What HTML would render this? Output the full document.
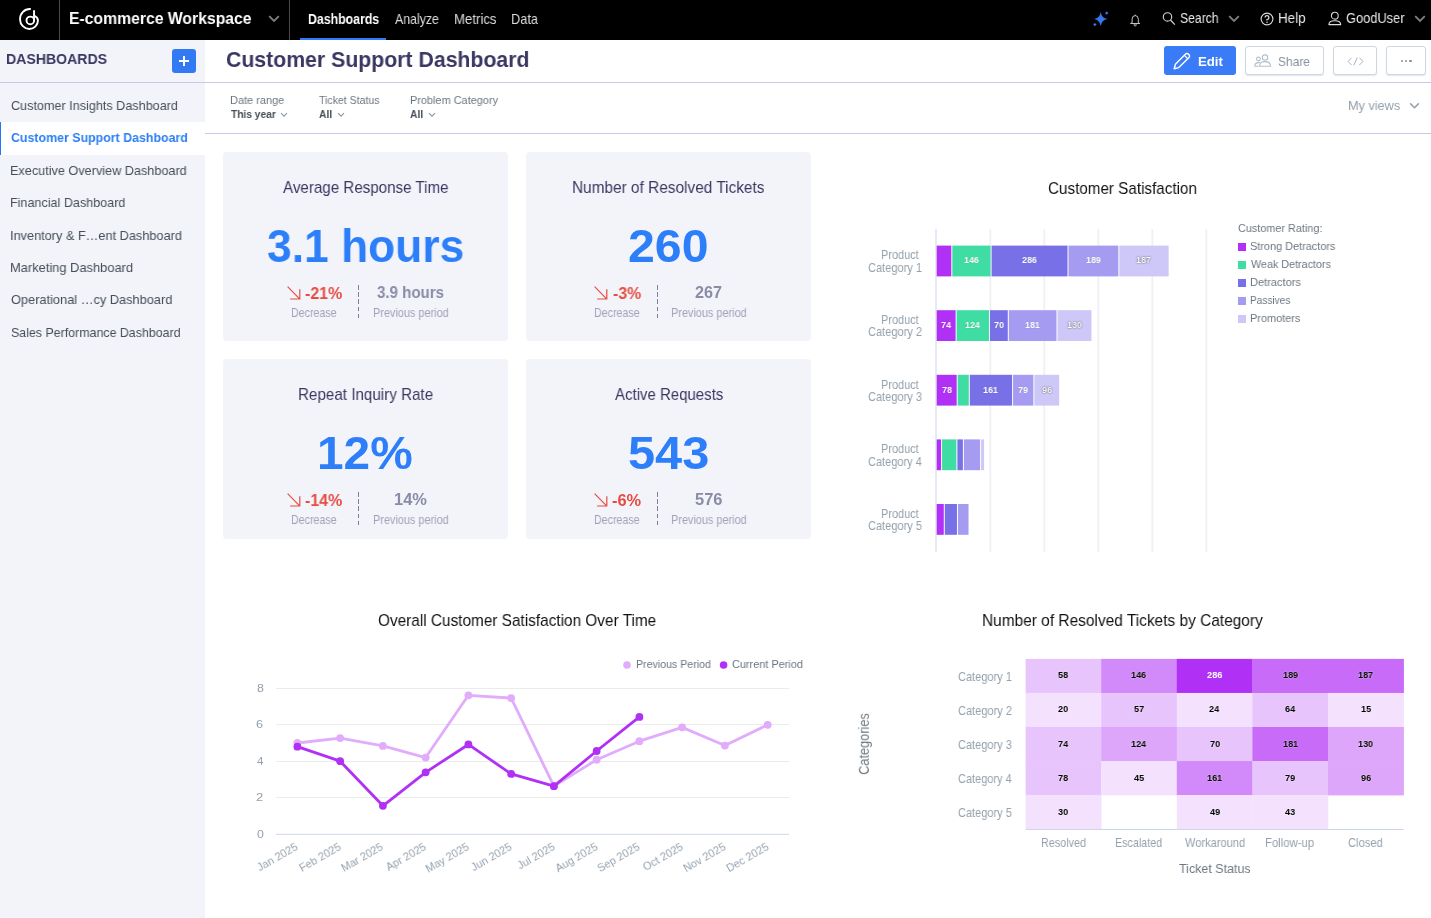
<!DOCTYPE html>
<html lang="en">
<head>
<meta charset="utf-8">
<title>Customer Support Dashboard</title>
<style>
*{box-sizing:border-box;margin:0;padding:0}
html,body{width:1431px;height:918px;overflow:hidden;background:#fff}
body{font-family:"Liberation Sans",sans-serif;position:relative;color:#464e56}
.abs{position:absolute}
.t{position:absolute;white-space:nowrap;line-height:1;transform-origin:0 0;will-change:transform}
#topbar{position:absolute;left:0;top:0;width:1431px;height:40px;background:#000}
.tsep{position:absolute;top:0;width:1px;height:40px;background:#4a4a4a}
#side{position:absolute;left:0;top:40px;width:205px;height:878px;background:#f3f4fa}
#sel{position:absolute;left:0;top:122px;width:205px;height:33px;background:#fff;border-left:1px solid #2276fc}
#hline{position:absolute;left:0;top:82px;width:1431px;height:1px;background:#c4c8ea}
#fline{position:absolute;left:205px;top:133px;width:1226px;height:1px;background:#c4c8ea}
.btn{position:absolute;top:46px;height:29px;border:1px solid #cfd8e2;border-radius:3px;background:#fff;box-shadow:0 1px 1px rgba(20,56,93,.12)}
.card{position:absolute;background:#f3f4fa;border-radius:4px}
.kdiv{position:absolute;width:1px;height:36px;background:repeating-linear-gradient(to bottom,#7f8199 0,#7f8199 4.7px,transparent 4.7px,transparent 7.2px)}
svg{position:absolute;overflow:visible}
</style>
</head>
<body>
<div id="topbar">
<svg style="left:16px;top:6px" width="26" height="28" viewBox="16 6 26 28">
<path d="M30.1 8.95 A9.7 10.2 0 0 0 20.05 19.4 A9.5 9.7 0 0 0 29.5 29 A8.6 8.6 0 0 0 37.95 20.4 Q37.9 17.4 34.4 15.9" fill="none" stroke="#fff" stroke-width="1.9" stroke-linecap="round"/>
<circle cx="30.3" cy="20.4" r="3.8" fill="none" stroke="#fff" stroke-width="1.9"/>
<path d="M34.05 20.4 V11" fill="none" stroke="#fff" stroke-width="1.95" stroke-linecap="round"/>
</svg>
<div class="tsep" style="left:59px"></div>
<div class="t" id="ws" style="left:68.58px;top:11px;font-size:16.6px;color:#fff;font-weight:bold;transform:scaleX(0.9481);">E-commerce Workspace</div>
<svg style="left:268px;top:15.4px" width="12" height="8" viewBox="0 0 12 8"><path d="M1.2 1.2 L6 6 L10.8 1.2" fill="none" stroke="#808080" stroke-width="1.8"/></svg>
<div class="tsep" style="left:289px"></div>
<div class="t" id="n1" style="left:307.8px;top:12px;font-size:14.2px;color:#fff;font-weight:bold;transform:scaleX(0.8686);">Dashboards</div>
<div class="t" id="n2" style="left:394.6px;top:12px;font-size:14.2px;color:#dcdcdc;transform:scaleX(0.8695);">Analyze</div>
<div class="t" id="n3" style="left:453.54px;top:12px;font-size:14.2px;color:#dcdcdc;transform:scaleX(0.9299);">Metrics</div>
<div class="t" id="n4" style="left:510.58px;top:12px;font-size:14.2px;color:#dcdcdc;transform:scaleX(0.9020);">Data</div>
<div class="abs" style="left:300px;top:38px;width:86px;height:2px;background:#2f7df6"></div>
<svg id="spark" style="left:1093px;top:10px" width="17" height="17" viewBox="0 0 17 17">
<path d="M7.7 1.9 Q8.6 8.1 14.6 9 Q8.6 9.9 7.7 16.1 Q6.8 9.9 0.9 9 Q6.8 8.1 7.7 1.9Z" fill="#3577ee"/>
<path d="M13.7 1.4 L15.4 3.1 L13.7 4.8 L12 3.1Z" fill="#3577ee"/>
<path d="M1.9 12.9 L3.6 14.6 L1.9 16.3 L0.2 14.6Z" fill="#3577ee"/>
</svg>
<svg id="bell" style="left:1129px;top:14px" width="13" height="13" viewBox="0 0 13 13">
<path d="M3.1 8.9 V5.2 A3.1 3.6 0 0 1 9.3 5.2 V8.9 L10.9 9.5 H1.5 Z" fill="none" stroke="#c4c4c4" stroke-width="1" stroke-linejoin="round"/>
<circle cx="6.2" cy="10.9" r="1.1" fill="none" stroke="#c4c4c4" stroke-width="0.9"/>
<path d="M6.2 0.6 V1.7" stroke="#c4c4c4" stroke-width="1"/>
</svg>
<svg id="mag" style="left:1162px;top:12px" width="14" height="14" viewBox="0 0 14 14"><circle cx="5.5" cy="4.9" r="4.2" fill="none" stroke="#d0d0d0" stroke-width="1.15"/><path d="M8.5 8 L12.8 12.6" stroke="#d0d0d0" stroke-width="1.3"/></svg>
<div class="t" id="r1" style="left:1180.15px;top:11px;font-size:14px;color:#e6e6e6;transform:scaleX(0.8707);">Search</div>
<svg style="left:1227.7px;top:14.6px" width="12" height="8" viewBox="0 0 12 8"><path d="M1.2 1.2 L6 6 L10.8 1.2" fill="none" stroke="#808080" stroke-width="1.8"/></svg>
<svg id="helpi" style="left:1260px;top:12px" width="14" height="14" viewBox="0 0 14 14"><circle cx="7" cy="7" r="5.9" fill="none" stroke="#ddd" stroke-width="1.1"/><path d="M5.1 5.6 A1.9 1.9 0 1 1 7 7.5 V8.6" fill="none" stroke="#ddd" stroke-width="1.2"/><circle cx="7" cy="10.3" r="0.75" fill="#ddd"/></svg>
<div class="t" id="r2" style="left:1277.93px;top:11px;font-size:14px;color:#e6e6e6;transform:scaleX(0.9598);">Help</div>
<svg id="useri" style="left:1328px;top:12px" width="14" height="14" viewBox="0 0 14 14"><circle cx="6.8" cy="3.7" r="3.4" fill="none" stroke="#d4d4d4" stroke-width="1.1"/><path d="M0.9 12.6 C0.9 9.6 3.4 8.7 6.8 8.7 C10.2 8.7 12.7 9.6 12.7 12.6 Z" fill="none" stroke="#ddd" stroke-width="1.1" stroke-linejoin="round"/></svg>
<div class="t" id="r3" style="left:1346.46px;top:11px;font-size:14px;color:#e6e6e6;transform:scaleX(0.9169);">GoodUser</div>
<svg style="left:1413.9px;top:14.6px" width="12" height="8" viewBox="0 0 12 8"><path d="M1.2 1.2 L6 6 L10.8 1.2" fill="none" stroke="#808080" stroke-width="1.8"/></svg>
</div>
<div id="side"></div><div id="sel"></div>
<div class="t" id="dbh" style="left:6.48px;top:51px;font-size:15px;color:#3a3761;font-weight:bold;transform:scaleX(0.9398);">DASHBOARDS</div>
<div class="abs" style="left:172px;top:49px;width:24px;height:24px;background:#3279f4;border-radius:3px"><div class="abs" style="left:6.6px;top:11.3px;width:10.8px;height:1.5px;background:#fff"></div><div class="abs" style="left:11.25px;top:6.6px;width:1.5px;height:10.8px;background:#fff"></div></div>
<div class="t" id="s0" style="left:10.77px;top:99px;font-size:13.3px;color:#464e56;transform:scaleX(0.9490);">Customer Insights Dashboard</div>
<div class="t" id="s1" style="left:10.9px;top:131px;font-size:13.3px;color:#2b7ff6;font-weight:bold;transform:scaleX(0.9314);">Customer Support Dashboard</div>
<div class="t" id="s2" style="left:10.39px;top:164px;font-size:13.3px;color:#464e56;transform:scaleX(0.9528);">Executive Overview Dashboard</div>
<div class="t" id="s3" style="left:10.39px;top:196px;font-size:13.3px;color:#464e56;transform:scaleX(0.9459);">Financial Dashboard</div>
<div class="t" id="s4" style="left:10.25px;top:229px;font-size:13.3px;color:#464e56;transform:scaleX(0.9571);">Inventory &amp; F…ent Dashboard</div>
<div class="t" id="s5" style="left:10.37px;top:261px;font-size:13.3px;color:#464e56;transform:scaleX(0.9682);">Marketing Dashboard</div>
<div class="t" id="s6" style="left:10.82px;top:293px;font-size:13.3px;color:#464e56;transform:scaleX(0.9616);">Operational …cy Dashboard</div>
<div class="t" id="s7" style="left:10.84px;top:326px;font-size:13.3px;color:#464e56;transform:scaleX(0.9325);">Sales Performance Dashboard</div>
<div id="hline"></div>
<div class="t" id="title" style="left:225.75px;top:49px;font-size:22.4px;color:#3a3761;font-weight:bold;transform:scaleX(0.9492);">Customer Support Dashboard</div>
<div class="abs" style="left:1164px;top:46px;width:72px;height:29px;background:#3a7cf7;border-radius:3px"></div>
<svg style="left:1172px;top:51px" width="20" height="20" viewBox="0 0 20 20">
<path d="M2.2 17.8 L3.4 13.2 L13.6 3 A1.9 1.9 0 0 1 16.3 3 L17 3.7 A1.9 1.9 0 0 1 17 6.4 L6.8 16.6 Z" fill="none" stroke="#fff" stroke-width="1.4" stroke-linejoin="round"/>
<path d="M12.4 4.4 L15.6 7.6" stroke="#fff" stroke-width="1.3"/>
</svg>
<div class="t" id="bedit" style="left:1197.56px;top:55px;font-size:13.2px;color:#fff;font-weight:bold;transform:scaleX(0.9836);">Edit</div>
<div class="btn" style="left:1245px;width:79px"></div>
<svg style="left:1254px;top:54px" width="18" height="13" viewBox="0 0 18 13">
<circle cx="11" cy="3.6" r="2.7" fill="none" stroke="#b3c0cc" stroke-width="1.1"/>
<path d="M5.6 12.2 C5.6 8.8 7.6 7.6 11 7.6 C14.4 7.6 16.6 8.8 16.6 12.2 Z" fill="none" stroke="#b3c0cc" stroke-width="1.1" stroke-linejoin="round"/>
<circle cx="4.4" cy="5" r="1.9" fill="none" stroke="#b3c0cc" stroke-width="1.1"/>
<path d="M4.6 12.2 H0.8 C0.8 9.6 2 8.6 4.6 8.6 C5.2 8.6 5.6 8.7 6 8.8" fill="none" stroke="#b3c0cc" stroke-width="1.1" stroke-linejoin="round"/>
</svg>
<div class="t" id="bshare" style="left:1278.46px;top:55px;font-size:13.2px;color:#8492a0;transform:scaleX(0.9073);">Share</div>
<div class="btn" style="left:1333px;width:44px"></div>
<svg style="left:1347px;top:57px" width="17" height="9" viewBox="0 0 17 9"><path d="M4.6 0.8 L1 4.4 L4.6 8 M12.4 0.8 L16 4.4 L12.4 8 M10.2 0.6 L6.8 8.2" fill="none" stroke="#a8b4c0" stroke-width="1"/></svg>
<div class="btn" style="left:1386px;width:40px"></div>
<div class="abs" style="left:1401.2px;top:60.2px;width:2.2px;height:2.2px;border-radius:50%;background:#8492a0"></div>
<div class="abs" style="left:1405.3px;top:60.2px;width:2.2px;height:2.2px;border-radius:50%;background:#8492a0"></div>
<div class="abs" style="left:1409.4px;top:60.2px;width:2.2px;height:2.2px;border-radius:50%;background:#8492a0"></div>
<div class="t" id="f1" style="left:229.82px;top:95px;font-size:11.3px;color:#6d7680;transform:scaleX(0.9721);">Date range</div>
<div class="t" id="f1v" style="left:230.6px;top:109px;font-size:11.3px;color:#464e56;font-weight:bold;transform:scaleX(0.9022);">This year</div>
<div class="t" id="f2" style="left:318.59px;top:95px;font-size:11.3px;color:#6d7680;transform:scaleX(0.9332);">Ticket Status</div>
<div class="t" id="f2v" style="left:318.54px;top:109px;font-size:11.3px;color:#464e56;font-weight:bold;transform:scaleX(0.9111);">All</div>
<div class="t" id="f3" style="left:409.53px;top:95px;font-size:11.3px;color:#6d7680;transform:scaleX(0.9670);">Problem Category</div>
<div class="t" id="f3v" style="left:410.14px;top:109px;font-size:11.3px;color:#464e56;font-weight:bold;transform:scaleX(0.9111);">All</div>
<svg style="left:280.2px;top:111.8px" width="8" height="6" viewBox="0 0 8 6"><path d="M1 1.2 L4 4.2 L7 1.2" fill="none" stroke="#8a96a2" stroke-width="1.1"/></svg>
<svg style="left:336.5px;top:111.8px" width="8" height="6" viewBox="0 0 8 6"><path d="M1 1.2 L4 4.2 L7 1.2" fill="none" stroke="#8a96a2" stroke-width="1.1"/></svg>
<svg style="left:428.2px;top:111.8px" width="8" height="6" viewBox="0 0 8 6"><path d="M1 1.2 L4 4.2 L7 1.2" fill="none" stroke="#8a96a2" stroke-width="1.1"/></svg>
<div class="t" id="mv" style="left:1347.78px;top:99px;font-size:13px;color:#94a1ad;transform:scaleX(0.9762);">My views</div>
<svg style="left:1408.8px;top:102.2px" width="11" height="8" viewBox="0 0 11 8"><path d="M1.2 1.4 L5.5 5.7 L9.8 1.4" fill="none" stroke="#94a1ad" stroke-width="1.5"/></svg>
<div id="fline"></div>
<div class="card" style="left:223px;top:152px;width:285px;height:189px"></div>
<div class="t" style="left:283px;top:179px;font-size:16.4px;color:#3a3761;transform:scaleX(0.9239);">Average Response Time</div>
<div class="t" style="left:267.31px;top:222px;font-size:47px;color:#2d7ff9;font-weight:bold;transform:scaleX(0.9442);">3.1 hours</div>
<svg style="left:286.5px;top:286.4px" width="14" height="14" viewBox="0 0 14 14"><path d="M0.6 0.6 L12.6 12.8 M12.8 3.3 V13 H3.1" fill="none" stroke="#e54d42" stroke-width="1.2"/></svg>
<div class="t" style="left:305.16px;top:285px;font-size:16.4px;color:#e54d42;font-weight:bold;transform:scaleX(0.9724);">-21%</div>
<div class="t" style="left:290.85px;top:308px;font-size:11.9px;color:#a0a1b8;transform:scaleX(0.8969);">Decrease</div>
<div class="kdiv" style="left:358px;top:285px"></div>
<div class="t" style="left:377.4px;top:284px;font-size:16.2px;color:#8a8ba6;font-weight:bold;transform:scaleX(0.9305);">3.9 hours</div>
<div class="t" style="left:372.53px;top:308px;font-size:11.9px;color:#a0a1b8;transform:scaleX(0.9163);">Previous period</div>
<div class="card" style="left:526px;top:152px;width:285px;height:189px"></div>
<div class="t" style="left:571.87px;top:179px;font-size:16.4px;color:#3a3761;transform:scaleX(0.9390);">Number of Resolved Tickets</div>
<div class="t" style="left:628.46px;top:222px;font-size:47px;color:#2d7ff9;font-weight:bold;transform:scaleX(1.0264);">260</div>
<svg style="left:594.1px;top:286.4px" width="14" height="14" viewBox="0 0 14 14"><path d="M0.6 0.6 L12.6 12.8 M12.8 3.3 V13 H3.1" fill="none" stroke="#e54d42" stroke-width="1.2"/></svg>
<div class="t" style="left:612.56px;top:285px;font-size:16.4px;color:#e54d42;font-weight:bold;transform:scaleX(0.9706);">-3%</div>
<div class="t" style="left:593.85px;top:308px;font-size:11.9px;color:#a0a1b8;transform:scaleX(0.8969);">Decrease</div>
<div class="kdiv" style="left:657px;top:285px"></div>
<div class="t" style="left:695.44px;top:284px;font-size:16.2px;color:#8a8ba6;font-weight:bold;transform:scaleX(0.9900);">267</div>
<div class="t" style="left:671.03px;top:308px;font-size:11.9px;color:#a0a1b8;transform:scaleX(0.9163);">Previous period</div>
<div class="card" style="left:223px;top:359px;width:285px;height:180px"></div>
<div class="t" style="left:297.58px;top:386px;font-size:16.4px;color:#3a3761;transform:scaleX(0.9270);">Repeat Inquiry Rate</div>
<div class="t" style="left:316.83px;top:429px;font-size:47px;color:#2d7ff9;font-weight:bold;transform:scaleX(1.0177);">12%</div>
<svg style="left:286.5px;top:493.4px" width="14" height="14" viewBox="0 0 14 14"><path d="M0.6 0.6 L12.6 12.8 M12.8 3.3 V13 H3.1" fill="none" stroke="#e54d42" stroke-width="1.2"/></svg>
<div class="t" style="left:305.16px;top:492px;font-size:16.4px;color:#e54d42;font-weight:bold;transform:scaleX(0.9724);">-14%</div>
<div class="t" style="left:290.85px;top:515px;font-size:11.9px;color:#a0a1b8;transform:scaleX(0.8969);">Decrease</div>
<div class="kdiv" style="left:358px;top:492px"></div>
<div class="t" style="left:393.91px;top:491px;font-size:16.2px;color:#8a8ba6;font-weight:bold;transform:scaleX(1.0154);">14%</div>
<div class="t" style="left:372.63px;top:515px;font-size:11.9px;color:#a0a1b8;transform:scaleX(0.9163);">Previous period</div>
<div class="card" style="left:526px;top:359px;width:285px;height:180px"></div>
<div class="t" style="left:614.6px;top:386px;font-size:16.4px;color:#3a3761;transform:scaleX(0.9142);">Active Requests</div>
<div class="t" style="left:628.04px;top:429px;font-size:47px;color:#2d7ff9;font-weight:bold;transform:scaleX(1.0372);">543</div>
<svg style="left:593.8px;top:493.4px" width="14" height="14" viewBox="0 0 14 14"><path d="M0.6 0.6 L12.6 12.8 M12.8 3.3 V13 H3.1" fill="none" stroke="#e54d42" stroke-width="1.2"/></svg>
<div class="t" style="left:612.05px;top:492px;font-size:16.4px;color:#e54d42;font-weight:bold;transform:scaleX(0.9849);">-6%</div>
<div class="t" style="left:593.85px;top:515px;font-size:11.9px;color:#a0a1b8;transform:scaleX(0.8969);">Decrease</div>
<div class="kdiv" style="left:657px;top:492px"></div>
<div class="t" style="left:695.3px;top:491px;font-size:16.2px;color:#8a8ba6;font-weight:bold;transform:scaleX(1.0185);">576</div>
<div class="t" style="left:670.83px;top:515px;font-size:11.9px;color:#a0a1b8;transform:scaleX(0.9163);">Previous period</div>
<div class="t" id="bt" style="left:1047.99px;top:180px;font-size:16.4px;color:#111;transform:scaleX(0.9288);">Customer Satisfaction</div>
<svg style="left:0;top:0" width="1431" height="918" viewBox="0 0 1431 918" shape-rendering="crispEdges">
<rect x="989.4" y="229" width="1.8" height="323" fill="#f0f0f3" shape-rendering="auto"/>
<rect x="1043.4" y="229" width="1.8" height="323" fill="#f0f0f3" shape-rendering="auto"/>
<rect x="1097.4" y="229" width="1.8" height="323" fill="#f0f0f3" shape-rendering="auto"/>
<rect x="1151.4" y="229" width="1.8" height="323" fill="#f0f0f3" shape-rendering="auto"/>
<rect x="1205.4" y="229" width="1.8" height="323" fill="#f0f0f3" shape-rendering="auto"/>
<rect x="935.5" y="229" width="1" height="323" fill="#ccd6eb" shape-rendering="auto"/>
<rect x="936.7" y="245.6" width="14.6" height="30.8" fill="#b030f5" shape-rendering="auto"/>
<rect x="952.3" y="245.6" width="38.27" height="30.8" fill="#3fdca4" shape-rendering="auto"/>
<rect x="991.58" y="245.6" width="75.93" height="30.8" fill="#7870e6" shape-rendering="auto"/>
<rect x="1068.51" y="245.6" width="49.84" height="30.8" fill="#a59bf0" shape-rendering="auto"/>
<rect x="1119.35" y="245.6" width="49.3" height="30.8" fill="#cdc8f7" shape-rendering="auto"/>
<rect x="936.7" y="310.2" width="18.91" height="30.8" fill="#b030f5" shape-rendering="auto"/>
<rect x="956.61" y="310.2" width="32.36" height="30.8" fill="#3fdca4" shape-rendering="auto"/>
<rect x="989.96" y="310.2" width="17.83" height="30.8" fill="#7870e6" shape-rendering="auto"/>
<rect x="1008.79" y="310.2" width="47.69" height="30.8" fill="#a59bf0" shape-rendering="auto"/>
<rect x="1057.48" y="310.2" width="33.97" height="30.8" fill="#cdc8f7" shape-rendering="auto"/>
<rect x="936.7" y="374.8" width="19.98" height="30.8" fill="#b030f5" shape-rendering="auto"/>
<rect x="957.68" y="374.8" width="11.11" height="30.8" fill="#3fdca4" shape-rendering="auto"/>
<rect x="969.79" y="374.8" width="42.31" height="30.8" fill="#7870e6" shape-rendering="auto"/>
<rect x="1013.1" y="374.8" width="20.25" height="30.8" fill="#a59bf0" shape-rendering="auto"/>
<rect x="1034.35" y="374.8" width="24.82" height="30.8" fill="#cdc8f7" shape-rendering="auto"/>
<rect x="936.7" y="439.4" width="4.38" height="30.8" fill="#b030f5" shape-rendering="auto"/>
<rect x="942.08" y="439.4" width="14.33" height="30.8" fill="#3fdca4" shape-rendering="auto"/>
<rect x="957.41" y="439.4" width="5.46" height="30.8" fill="#7870e6" shape-rendering="auto"/>
<rect x="963.87" y="439.4" width="16.22" height="30.8" fill="#a59bf0" shape-rendering="auto"/>
<rect x="981.09" y="439.4" width="3.03" height="30.8" fill="#cdc8f7" shape-rendering="auto"/>
<rect x="936.7" y="504" width="7.07" height="30.8" fill="#b030f5" shape-rendering="auto"/>
<rect x="944.77" y="504" width="12.18" height="30.8" fill="#7870e6" shape-rendering="auto"/>
<rect x="957.95" y="504" width="10.57" height="30.8" fill="#a59bf0" shape-rendering="auto"/>
</svg>
<div class="t" style="left:963.89px;top:256px;font-size:9.3px;color:#fff;font-weight:bold;transform:scaleX(0.9600);text-shadow:0 0 1px rgba(0,0,0,.25);">146</div>
<div class="t" style="left:1022.11px;top:256px;font-size:9.3px;color:#fff;font-weight:bold;transform:scaleX(0.9600);text-shadow:0 0 1px rgba(0,0,0,.25);">286</div>
<div class="t" style="left:1085.89px;top:256px;font-size:9.3px;color:#fff;font-weight:bold;transform:scaleX(0.9600);text-shadow:0 0 1px rgba(0,0,0,.25);">189</div>
<div class="t" style="left:1136.48px;top:256px;font-size:9.3px;color:#fff;font-weight:bold;transform:scaleX(0.9600);text-shadow:0 0 2px rgba(0,0,0,.55),0 0 1px rgba(0,0,0,.4);">187</div>
<div class="t" style="left:941.04px;top:321px;font-size:9.3px;color:#fff;font-weight:bold;transform:scaleX(0.9600);text-shadow:0 0 1px rgba(0,0,0,.25);">74</div>
<div class="t" style="left:965.11px;top:321px;font-size:9.3px;color:#fff;font-weight:bold;transform:scaleX(0.9600);text-shadow:0 0 1px rgba(0,0,0,.25);">124</div>
<div class="t" style="left:993.92px;top:321px;font-size:9.3px;color:#fff;font-weight:bold;transform:scaleX(0.9600);text-shadow:0 0 1px rgba(0,0,0,.25);">70</div>
<div class="t" style="left:1025.05px;top:321px;font-size:9.3px;color:#fff;font-weight:bold;transform:scaleX(0.9600);text-shadow:0 0 1px rgba(0,0,0,.25);">181</div>
<div class="t" style="left:1066.94px;top:321px;font-size:9.3px;color:#fff;font-weight:bold;transform:scaleX(0.9600);text-shadow:0 0 2px rgba(0,0,0,.55),0 0 1px rgba(0,0,0,.4);">130</div>
<div class="t" style="left:941.69px;top:386px;font-size:9.3px;color:#fff;font-weight:bold;transform:scaleX(0.9600);text-shadow:0 0 1px rgba(0,0,0,.25);">78</div>
<div class="t" style="left:983.35px;top:386px;font-size:9.3px;color:#fff;font-weight:bold;transform:scaleX(0.9600);text-shadow:0 0 1px rgba(0,0,0,.25);">161</div>
<div class="t" style="left:1018.24px;top:386px;font-size:9.3px;color:#fff;font-weight:bold;transform:scaleX(0.9600);text-shadow:0 0 1px rgba(0,0,0,.25);">79</div>
<div class="t" style="left:1041.8px;top:386px;font-size:9.3px;color:#fff;font-weight:bold;transform:scaleX(0.9600);text-shadow:0 0 2px rgba(0,0,0,.55),0 0 1px rgba(0,0,0,.4);">96</div>
<div class="t" style="left:881.12px;top:249px;font-size:12.4px;color:#94a1ad;transform:scaleX(0.8833);">Product</div>
<div class="t" style="left:868.25px;top:262px;font-size:12.4px;color:#94a1ad;transform:scaleX(0.8914);">Category 1</div>
<div class="t" style="left:881.12px;top:314px;font-size:12.4px;color:#94a1ad;transform:scaleX(0.8833);">Product</div>
<div class="t" style="left:868.25px;top:326px;font-size:12.4px;color:#94a1ad;transform:scaleX(0.8923);">Category 2</div>
<div class="t" style="left:881.12px;top:379px;font-size:12.4px;color:#94a1ad;transform:scaleX(0.8833);">Product</div>
<div class="t" style="left:868.25px;top:391px;font-size:12.4px;color:#94a1ad;transform:scaleX(0.8905);">Category 3</div>
<div class="t" style="left:881.12px;top:443px;font-size:12.4px;color:#94a1ad;transform:scaleX(0.8833);">Product</div>
<div class="t" style="left:868.25px;top:456px;font-size:12.4px;color:#94a1ad;transform:scaleX(0.8877);">Category 4</div>
<div class="t" style="left:881.12px;top:508px;font-size:12.4px;color:#94a1ad;transform:scaleX(0.8833);">Product</div>
<div class="t" style="left:868.25px;top:520px;font-size:12.4px;color:#94a1ad;transform:scaleX(0.8905);">Category 5</div>
<div class="t" style="left:1237.56px;top:223px;font-size:11.4px;color:#6d7680;transform:scaleX(0.9523);">Customer Rating:</div>
<div class="abs" style="left:1238px;top:243px;width:8px;height:8px;background:#b030f5"></div>
<div class="t" style="left:1250.21px;top:241px;font-size:11.4px;color:#6d7680;transform:scaleX(0.9569);">Strong Detractors</div>
<div class="abs" style="left:1238px;top:261px;width:8px;height:8px;background:#3fdca4"></div>
<div class="t" style="left:1250.65px;top:259px;font-size:11.4px;color:#6d7680;transform:scaleX(0.9449);">Weak Detractors</div>
<div class="abs" style="left:1238px;top:279px;width:8px;height:8px;background:#7870e6"></div>
<div class="t" style="left:1249.82px;top:277px;font-size:11.4px;color:#6d7680;transform:scaleX(0.9699);">Detractors</div>
<div class="abs" style="left:1238px;top:297px;width:8px;height:8px;background:#a59bf0"></div>
<div class="t" style="left:1249.89px;top:295px;font-size:11.4px;color:#6d7680;transform:scaleX(0.8851);">Passives</div>
<div class="abs" style="left:1238px;top:315px;width:8px;height:8px;background:#cdc8f7"></div>
<div class="t" style="left:1249.83px;top:313px;font-size:11.4px;color:#6d7680;transform:scaleX(0.9591);">Promoters</div>
<div class="t" id="lt" style="left:377.61px;top:612px;font-size:16.4px;color:#111;transform:scaleX(0.9368);">Overall Customer Satisfaction Over Time</div>
<svg style="left:0;top:0" width="1431" height="918" viewBox="0 0 1431 918">
<rect x="276" y="688" width="513" height="1" fill="#ebebeb" shape-rendering="crispEdges"/>
<rect x="276" y="724" width="513" height="1" fill="#ebebeb" shape-rendering="crispEdges"/>
<rect x="276" y="761" width="513" height="1" fill="#ebebeb" shape-rendering="crispEdges"/>
<rect x="276" y="797" width="513" height="1" fill="#ebebeb" shape-rendering="crispEdges"/>
<rect x="276" y="833.8" width="513" height="1" fill="#ccd6eb"/>
<polyline points="297.4,743 340.15,738.09 382.9,745.91 425.65,757.56 468.4,695.32 511.15,698.05 553.9,786.13 596.65,759.74 639.4,741.18 682.15,727.35 724.9,745.55 767.65,724.8" fill="none" stroke="#e0acfb" stroke-width="2.8" stroke-linejoin="round" stroke-linecap="round"/>
<circle cx="297.4" cy="743" r="3.9" fill="#e0acfb"/>
<circle cx="340.15" cy="738.09" r="3.9" fill="#e0acfb"/>
<circle cx="382.9" cy="745.91" r="3.9" fill="#e0acfb"/>
<circle cx="425.65" cy="757.56" r="3.9" fill="#e0acfb"/>
<circle cx="468.4" cy="695.32" r="3.9" fill="#e0acfb"/>
<circle cx="511.15" cy="698.05" r="3.9" fill="#e0acfb"/>
<circle cx="553.9" cy="786.13" r="3.9" fill="#e0acfb"/>
<circle cx="596.65" cy="759.74" r="3.9" fill="#e0acfb"/>
<circle cx="639.4" cy="741.18" r="3.9" fill="#e0acfb"/>
<circle cx="682.15" cy="727.35" r="3.9" fill="#e0acfb"/>
<circle cx="724.9" cy="745.55" r="3.9" fill="#e0acfb"/>
<circle cx="767.65" cy="724.8" r="3.9" fill="#e0acfb"/>
<polyline points="297.4,746.64 340.15,761.2 382.9,805.79 425.65,772.3 468.4,744.46 511.15,773.94 553.9,786.13 596.65,751.01 639.4,716.97" fill="none" stroke="#b030f5" stroke-width="2.8" stroke-linejoin="round" stroke-linecap="round"/>
<circle cx="297.4" cy="746.64" r="3.9" fill="#b030f5"/>
<circle cx="340.15" cy="761.2" r="3.9" fill="#b030f5"/>
<circle cx="382.9" cy="805.79" r="3.9" fill="#b030f5"/>
<circle cx="425.65" cy="772.3" r="3.9" fill="#b030f5"/>
<circle cx="468.4" cy="744.46" r="3.9" fill="#b030f5"/>
<circle cx="511.15" cy="773.94" r="3.9" fill="#b030f5"/>
<circle cx="553.9" cy="786.13" r="3.9" fill="#b030f5"/>
<circle cx="596.65" cy="751.01" r="3.9" fill="#b030f5"/>
<circle cx="639.4" cy="716.97" r="3.9" fill="#b030f5"/>
<circle cx="627" cy="665" r="3.8" fill="#e0acfb"/><circle cx="723.6" cy="665" r="3.8" fill="#b030f5"/>
</svg>
<div class="t" style="left:635.65px;top:659px;font-size:11.4px;color:#6d7680;transform:scaleX(0.9317);">Previous Period</div>
<div class="t" style="left:732.05px;top:659px;font-size:11.4px;color:#6d7680;transform:scaleX(0.9568);">Current Period</div>
<div class="t" style="left:256.5px;top:682px;font-size:11.6px;color:#94a1ad;transform:scaleX(1.0708);">8</div>
<div class="t" style="left:256.37px;top:718px;font-size:11.6px;color:#94a1ad;transform:scaleX(1.0938);">6</div>
<div class="t" style="left:256.77px;top:755px;font-size:11.6px;color:#94a1ad;transform:scaleX(0.9973);">4</div>
<div class="t" style="left:256.35px;top:791px;font-size:11.6px;color:#94a1ad;transform:scaleX(1.1178);">2</div>
<div class="t" style="left:256.51px;top:828px;font-size:11.6px;color:#94a1ad;transform:scaleX(1.0596);">0</div>
<div class="t" style="left:251.27px;top:839.3px;font-size:11.6px;color:#94a1ad;transform-origin:100% 10px;transform:rotate(-30deg) scaleX(0.943)">Jan 2025</div>
<div class="t" style="left:292.73px;top:839.3px;font-size:11.6px;color:#94a1ad;transform-origin:100% 10px;transform:rotate(-30deg) scaleX(0.943)">Feb 2025</div>
<div class="t" style="left:335.49px;top:839.3px;font-size:11.6px;color:#94a1ad;transform-origin:100% 10px;transform:rotate(-30deg) scaleX(0.943)">Mar 2025</div>
<div class="t" style="left:380.17px;top:839.3px;font-size:11.6px;color:#94a1ad;transform-origin:100% 10px;transform:rotate(-30deg) scaleX(0.943)">Apr 2025</div>
<div class="t" style="left:419.06px;top:839.3px;font-size:11.6px;color:#94a1ad;transform-origin:100% 10px;transform:rotate(-30deg) scaleX(0.943)">May 2025</div>
<div class="t" style="left:465.02px;top:839.3px;font-size:11.6px;color:#94a1ad;transform-origin:100% 10px;transform:rotate(-30deg) scaleX(0.943)">Jun 2025</div>
<div class="t" style="left:511.64px;top:839.3px;font-size:11.6px;color:#94a1ad;transform-origin:100% 10px;transform:rotate(-30deg) scaleX(0.943)">Jul 2025</div>
<div class="t" style="left:548.58px;top:839.3px;font-size:11.6px;color:#94a1ad;transform-origin:100% 10px;transform:rotate(-30deg) scaleX(0.943)">Aug 2025</div>
<div class="t" style="left:591.33px;top:839.3px;font-size:11.6px;color:#94a1ad;transform-origin:100% 10px;transform:rotate(-30deg) scaleX(0.943)">Sep 2025</div>
<div class="t" style="left:636.68px;top:839.3px;font-size:11.6px;color:#94a1ad;transform-origin:100% 10px;transform:rotate(-30deg) scaleX(0.943)">Oct 2025</div>
<div class="t" style="left:676.84px;top:839.3px;font-size:11.6px;color:#94a1ad;transform-origin:100% 10px;transform:rotate(-30deg) scaleX(0.943)">Nov 2025</div>
<div class="t" style="left:719.59px;top:839.3px;font-size:11.6px;color:#94a1ad;transform-origin:100% 10px;transform:rotate(-30deg) scaleX(0.943)">Dec 2025</div>
<div class="t" id="ht" style="left:981.91px;top:612px;font-size:16.4px;color:#111;transform:scaleX(0.9425);">Number of Resolved Tickets by Category</div>
<svg style="left:0;top:0" width="1431" height="918" viewBox="0 0 1431 918">
<rect x="1025.6" y="658.9" width="75.9" height="34.35" fill="#e8c4fc"/>
<rect x="1101.2" y="658.9" width="75.9" height="34.35" fill="#d289f9"/>
<rect x="1176.8" y="658.9" width="75.9" height="34.35" fill="#b030f5"/>
<rect x="1252.4" y="658.9" width="75.9" height="34.35" fill="#c76bf8"/>
<rect x="1328" y="658.9" width="75.9" height="34.35" fill="#c76bf8"/>
<rect x="1025.6" y="692.95" width="75.9" height="34.35" fill="#f4e1fe"/>
<rect x="1101.2" y="692.95" width="75.9" height="34.35" fill="#e8c4fc"/>
<rect x="1176.8" y="692.95" width="75.9" height="34.35" fill="#f4e1fe"/>
<rect x="1252.4" y="692.95" width="75.9" height="34.35" fill="#e8c4fc"/>
<rect x="1328" y="692.95" width="75.9" height="34.35" fill="#f4e1fe"/>
<rect x="1025.6" y="727" width="75.9" height="34.35" fill="#e8c4fc"/>
<rect x="1101.2" y="727" width="75.9" height="34.35" fill="#dda6fb"/>
<rect x="1176.8" y="727" width="75.9" height="34.35" fill="#e8c4fc"/>
<rect x="1252.4" y="727" width="75.9" height="34.35" fill="#c76bf8"/>
<rect x="1328" y="727" width="75.9" height="34.35" fill="#dda6fb"/>
<rect x="1025.6" y="761.05" width="75.9" height="34.35" fill="#e8c4fc"/>
<rect x="1101.2" y="761.05" width="75.9" height="34.35" fill="#f4e1fe"/>
<rect x="1176.8" y="761.05" width="75.9" height="34.35" fill="#d289f9"/>
<rect x="1252.4" y="761.05" width="75.9" height="34.35" fill="#e8c4fc"/>
<rect x="1328" y="761.05" width="75.9" height="34.35" fill="#dda6fb"/>
<rect x="1025.6" y="795.1" width="75.9" height="34.35" fill="#f4e1fe"/>
<rect x="1176.8" y="795.1" width="75.9" height="34.35" fill="#f4e1fe"/>
<rect x="1252.4" y="795.1" width="75.9" height="34.35" fill="#f4e1fe"/>
<rect x="1025.6" y="829" width="378" height="1" fill="#ccd6eb"/>
</svg>
<div class="t" style="left:1058.39px;top:671px;font-size:9.3px;color:#000;font-weight:bold;transform:scaleX(0.9700);text-shadow:0 0 1.5px rgba(255,255,255,.9);">58</div>
<div class="t" style="left:1131.38px;top:671px;font-size:9.3px;color:#000;font-weight:bold;transform:scaleX(0.9700);text-shadow:0 0 1.5px rgba(255,255,255,.9);">146</div>
<div class="t" style="left:1207.09px;top:671px;font-size:9.3px;color:#fff;font-weight:bold;transform:scaleX(0.9700);">286</div>
<div class="t" style="left:1282.58px;top:671px;font-size:9.3px;color:#000;font-weight:bold;transform:scaleX(0.9700);text-shadow:0 0 1.5px rgba(255,255,255,.9);">189</div>
<div class="t" style="left:1358.2px;top:671px;font-size:9.3px;color:#000;font-weight:bold;transform:scaleX(0.9700);text-shadow:0 0 1.5px rgba(255,255,255,.9);">187</div>
<div class="t" style="left:1058.42px;top:705px;font-size:9.3px;color:#000;font-weight:bold;transform:scaleX(0.9700);text-shadow:0 0 1.5px rgba(255,255,255,.9);">20</div>
<div class="t" style="left:1134.04px;top:705px;font-size:9.3px;color:#000;font-weight:bold;transform:scaleX(0.9700);text-shadow:0 0 1.5px rgba(255,255,255,.9);">57</div>
<div class="t" style="left:1209.46px;top:705px;font-size:9.3px;color:#000;font-weight:bold;transform:scaleX(0.9700);text-shadow:0 0 1.5px rgba(255,255,255,.9);">24</div>
<div class="t" style="left:1285.06px;top:705px;font-size:9.3px;color:#000;font-weight:bold;transform:scaleX(0.9700);text-shadow:0 0 1.5px rgba(255,255,255,.9);">64</div>
<div class="t" style="left:1360.64px;top:705px;font-size:9.3px;color:#000;font-weight:bold;transform:scaleX(0.9700);text-shadow:0 0 1.5px rgba(255,255,255,.9);">15</div>
<div class="t" style="left:1058.24px;top:740px;font-size:9.3px;color:#000;font-weight:bold;transform:scaleX(0.9700);text-shadow:0 0 1.5px rgba(255,255,255,.9);">74</div>
<div class="t" style="left:1131.24px;top:740px;font-size:9.3px;color:#000;font-weight:bold;transform:scaleX(0.9700);text-shadow:0 0 1.5px rgba(255,255,255,.9);">124</div>
<div class="t" style="left:1209.59px;top:740px;font-size:9.3px;color:#000;font-weight:bold;transform:scaleX(0.9700);text-shadow:0 0 1.5px rgba(255,255,255,.9);">70</div>
<div class="t" style="left:1282.53px;top:740px;font-size:9.3px;color:#000;font-weight:bold;transform:scaleX(0.9700);text-shadow:0 0 1.5px rgba(255,255,255,.9);">181</div>
<div class="t" style="left:1358.2px;top:740px;font-size:9.3px;color:#000;font-weight:bold;transform:scaleX(0.9700);text-shadow:0 0 1.5px rgba(255,255,255,.9);">130</div>
<div class="t" style="left:1058.35px;top:774px;font-size:9.3px;color:#000;font-weight:bold;transform:scaleX(0.9700);text-shadow:0 0 1.5px rgba(255,255,255,.9);">78</div>
<div class="t" style="left:1134.04px;top:774px;font-size:9.3px;color:#000;font-weight:bold;transform:scaleX(0.9700);text-shadow:0 0 1.5px rgba(255,255,255,.9);">45</div>
<div class="t" style="left:1206.93px;top:774px;font-size:9.3px;color:#000;font-weight:bold;transform:scaleX(0.9700);text-shadow:0 0 1.5px rgba(255,255,255,.9);">161</div>
<div class="t" style="left:1285.17px;top:774px;font-size:9.3px;color:#000;font-weight:bold;transform:scaleX(0.9700);text-shadow:0 0 1.5px rgba(255,255,255,.9);">79</div>
<div class="t" style="left:1360.79px;top:774px;font-size:9.3px;color:#000;font-weight:bold;transform:scaleX(0.9700);text-shadow:0 0 1.5px rgba(255,255,255,.9);">96</div>
<div class="t" style="left:1058.48px;top:808px;font-size:9.3px;color:#000;font-weight:bold;transform:scaleX(0.9700);text-shadow:0 0 1.5px rgba(255,255,255,.9);">30</div>
<div class="t" style="left:1209.68px;top:808px;font-size:9.3px;color:#000;font-weight:bold;transform:scaleX(0.9700);text-shadow:0 0 1.5px rgba(255,255,255,.9);">49</div>
<div class="t" style="left:1285.28px;top:808px;font-size:9.3px;color:#000;font-weight:bold;transform:scaleX(0.9700);text-shadow:0 0 1.5px rgba(255,255,255,.9);">43</div>
<div class="t" style="left:957.95px;top:671px;font-size:12.4px;color:#94a1ad;transform:scaleX(0.8897);">Category 1</div>
<div class="t" style="left:957.95px;top:705px;font-size:12.4px;color:#94a1ad;transform:scaleX(0.8906);">Category 2</div>
<div class="t" style="left:957.95px;top:739px;font-size:12.4px;color:#94a1ad;transform:scaleX(0.8888);">Category 3</div>
<div class="t" style="left:957.95px;top:773px;font-size:12.4px;color:#94a1ad;transform:scaleX(0.8860);">Category 4</div>
<div class="t" style="left:957.95px;top:807px;font-size:12.4px;color:#94a1ad;transform:scaleX(0.8888);">Category 5</div>
<div class="t" style="left:1040.79px;top:837px;font-size:12.1px;color:#94a1ad;transform:scaleX(0.8921);">Resolved</div>
<div class="t" style="left:1115.34px;top:837px;font-size:12.1px;color:#94a1ad;transform:scaleX(0.8867);">Escalated</div>
<div class="t" style="left:1184.84px;top:837px;font-size:12.1px;color:#94a1ad;transform:scaleX(0.9150);">Workaround</div>
<div class="t" style="left:1265.44px;top:837px;font-size:12.1px;color:#94a1ad;transform:scaleX(0.9353);">Follow-up</div>
<div class="t" style="left:1348.49px;top:837px;font-size:12.1px;color:#94a1ad;transform:scaleX(0.9229);">Closed</div>
<div class="t" style="left:1178.85px;top:862px;font-size:13.7px;color:#6d7680;transform:scaleX(0.9108);">Ticket Status</div>
<div class="t" style="left:830.15px;top:736.7px;font-size:14px;color:#6d7680;transform-origin:50% 50%;transform:rotate(-90deg) scaleX(0.908)">Categories</div>
</body>
</html>
